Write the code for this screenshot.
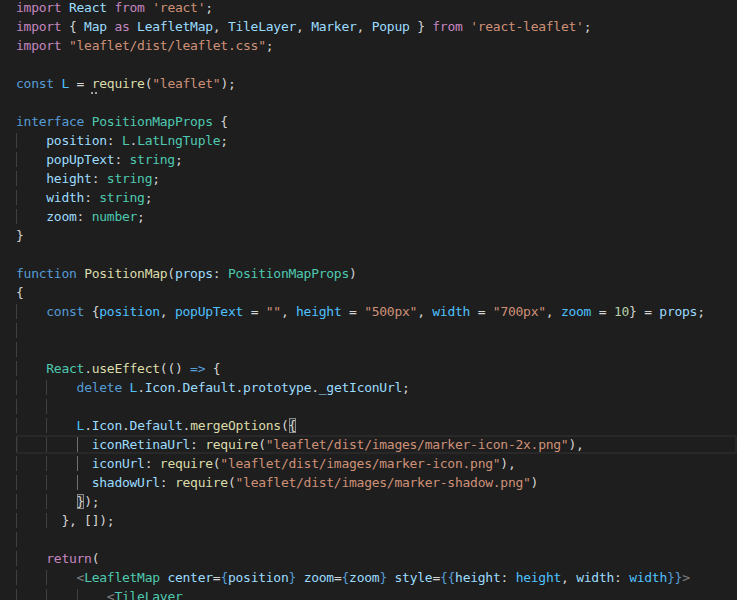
import React from 'react'

type Tok = [string, string?]

interface Line {
  ind?: number
  g?: number
  active?: number
  current?: boolean
  t: Tok[]
}

const KW = 'text-[#c586c0]'
const BL = 'text-[#569cd6]'
const VAR = 'text-[#9cdcfe]'
const CON = 'text-[#4fc1ff]'
const STR = 'text-[#ce9178]'
const FN = 'text-[#dcdcaa]'
const TY = 'text-[#4ec9b0]'
const NUM = 'text-[#b5cea8]'
const GR = 'text-[#808080]'
const BOX = 'BOX'
const DOTS = 'DOTS'

const lines: Line[] = [
  { t: [['import', KW], [' '], ['React', VAR], [' '], ['from', KW], [' '], ["'react'", STR], [';']] },
  {
    t: [
      ['import', KW], [' { '], ['Map', VAR], [' '], ['as', KW], [' '], ['LeafletMap', VAR], [', '],
      ['TileLayer', VAR], [', '], ['Marker', VAR], [', '], ['Popup', VAR], [' } '], ['from', KW], [' '],
      ["'react-leaflet'", STR], [';'],
    ],
  },
  { t: [['import', KW], [' '], ['"leaflet/dist/leaflet.css"', STR], [';']] },
  { t: [] },
  { t: [['const', BL], [' '], ['L', CON], [' = '], ['r', DOTS], ['equire', FN], ['('], ['"leaflet"', STR], [');']] },
  { t: [] },
  { t: [['interface', BL], [' '], ['PositionMapProps', TY], [' {']] },
  { ind: 4, g: 1, t: [['position', VAR], [': '], ['L', TY], ['.'], ['LatLngTuple', TY], [';']] },
  { ind: 4, g: 1, t: [['popUpText', VAR], [': '], ['string', TY], [';']] },
  { ind: 4, g: 1, t: [['height', VAR], [': '], ['string', TY], [';']] },
  { ind: 4, g: 1, t: [['width', VAR], [': '], ['string', TY], [';']] },
  { ind: 4, g: 1, t: [['zoom', VAR], [': '], ['number', TY], [';']] },
  { t: [['}']] },
  { t: [] },
  { t: [['function', BL], [' '], ['PositionMap', FN], ['('], ['props', VAR], [': '], ['PositionMapProps', TY], [')']] },
  { t: [['{']] },
  {
    ind: 4,
    g: 1,
    t: [
      ['const', BL], [' {'], ['position', CON], [', '], ['popUpText', CON], [' = '], ['""', STR], [', '],
      ['height', CON], [' = '], ['"500px"', STR], [', '], ['width', CON], [' = '], ['"700px"', STR], [', '],
      ['zoom', CON], [' = '], ['10', NUM], ['} = '], ['props', VAR], [';'],
    ],
  },
  { ind: 4, g: 1, t: [] },
  { ind: 4, g: 1, t: [] },
  { ind: 4, g: 1, t: [['React', TY], ['.'], ['useEffect', FN], ['(() '], ['=>', BL], [' {']] },
  {
    ind: 8,
    g: 2,
    t: [['delete', BL], [' '], ['L', CON], ['.'], ['Icon', VAR], ['.'], ['Default', VAR], ['.'], ['prototype', VAR], ['.'], ['_getIconUrl', VAR], [';']],
  },
  { ind: 8, g: 2, t: [] },
  { ind: 8, g: 2, t: [['L', CON], ['.'], ['Icon', VAR], ['.'], ['Default', VAR], ['.'], ['mergeOptions', FN], ['('], ['{', BOX]] },
  {
    ind: 10,
    g: 3,
    active: 2,
    current: true,
    t: [['iconRetinaUrl', VAR], [': '], ['require', FN], ['('], ['"leaflet/dist/images/marker-icon-2x.png"', STR], ['),']],
  },
  { ind: 10, g: 3, active: 2, t: [['iconUrl', VAR], [': '], ['require', FN], ['('], ['"leaflet/dist/images/marker-icon.png"', STR], ['),']] },
  { ind: 10, g: 3, active: 2, t: [['shadowUrl', VAR], [': '], ['require', FN], ['('], ['"leaflet/dist/images/marker-shadow.png"', STR], [')']] },
  { ind: 8, g: 2, t: [['}', BOX], [');']] },
  { ind: 6, g: 2, t: [['}, []);']] },
  { ind: 4, g: 1, t: [] },
  { ind: 4, g: 1, t: [['return', KW], ['(']] },
  {
    ind: 8,
    g: 2,
    t: [
      ['<', GR], ['LeafletMap', TY], [' '], ['center', VAR], ['='], ['{', BL], ['position', VAR], ['}', BL], [' '],
      ['zoom', VAR], ['='], ['{', BL], ['zoom', VAR], ['}', BL], [' '], ['style', VAR], ['='], ['{{', BL],
      ['height', VAR], [': '], ['height', CON], [', '], ['width', VAR], [': '], ['width', CON], ['}}', BL], ['>', GR],
    ],
  },
  { ind: 12, g: 3, t: [['<', GR], ['TileLayer', TY]] },
]

function Indent({ ind = 0, g = 0, active }: { ind?: number; g?: number; active?: number }) {
  const chunks = []
  for (let k = 0; k < ind; k += 4) {
    const level = k / 4
    const text = ' '.repeat(Math.min(4, ind - k))
    let cls = ''
    if (level < g) cls = level === active ? 'shadow-[inset_1px_0_0_#707070]' : 'shadow-[inset_1px_0_0_#404040]'
    chunks.push(
      <span key={k} className={cls}>
        {text}
      </span>
    )
  }
  return <>{chunks}</>
}

function Token({ tok }: { tok: Tok }) {
  const [text, cls] = tok
  if (cls === BOX) {
    return <span className="shadow-[inset_0_0_0_1px_#8a8a8a] bg-[#2a2d2e]">{text}</span>
  }
  if (cls === DOTS) {
    return (
      <span className="text-[#dcdcaa] underline decoration-dotted decoration-[#a0a0a0] decoration-2 underline-offset-[4px]">
        {text}
      </span>
    )
  }
  return <span className={cls}>{text}</span>
}

export default function App() {
  return (
    <div className="w-[737px] h-[600px] overflow-hidden bg-[#1e1e1e]">
      <div className="-mt-[2px] pl-[16px] font-['DejaVu_Sans_Mono',monospace] text-[13px] tracking-[-0.26px] leading-[19px] text-[#d4d4d4]">
        {lines.map((line, i) => (
          <div
            key={i}
            className={`h-[19px] whitespace-pre ${line.current ? 'shadow-[inset_0_0_0_2px_#282828]' : ''}`}
          >
            <Indent ind={line.ind} g={line.g} active={line.active} />
            {line.t.map((tok, j) => (
              <Token key={j} tok={tok} />
            ))}
          </div>
        ))}
      </div>
    </div>
  )
}
